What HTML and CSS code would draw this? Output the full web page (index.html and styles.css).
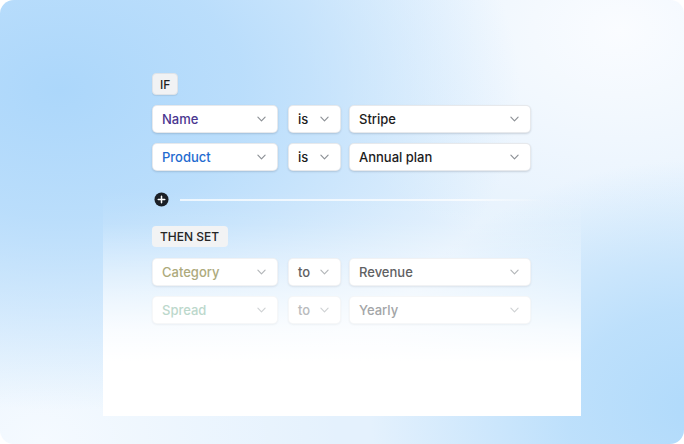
FILE: index.html
```html
<!DOCTYPE html>
<html>
<head>
<meta charset="utf-8">
<link rel="stylesheet" href="styles.css">
</head>
<body>
<div class="frame">
  <div class="fade-panel"></div>
  <div class="rules">
    <div class="tag tag-if">IF</div>
    <div class="row">
      <div class="select"><span class="t-name">Name</span><svg class="chev" viewBox="0 0 10 6"><path d="M1 1l4 4 4-4"/></svg></div>
      <div class="select"><span class="t-dark">is</span><svg class="chev" viewBox="0 0 10 6"><path d="M1 1l4 4 4-4"/></svg></div>
      <div class="select"><span class="t-dark">Stripe</span><svg class="chev" viewBox="0 0 10 6"><path d="M1 1l4 4 4-4"/></svg></div>
    </div>
    <div class="row">
      <div class="select"><span class="t-product">Product</span><svg class="chev" viewBox="0 0 10 6"><path d="M1 1l4 4 4-4"/></svg></div>
      <div class="select"><span class="t-dark">is</span><svg class="chev" viewBox="0 0 10 6"><path d="M1 1l4 4 4-4"/></svg></div>
      <div class="select"><span class="t-dark">Annual plan</span><svg class="chev" viewBox="0 0 10 6"><path d="M1 1l4 4 4-4"/></svg></div>
    </div>
    <div class="divider">
      <svg class="plus" viewBox="0 0 16 16"><circle cx="8" cy="8" r="7.5"/><path d="M8 4.5v7M4.5 8h7"/></svg>
      <div class="line"></div>
    </div>
    <div class="tag tag-then">THEN SET</div>
    <div class="row row-faded">
      <div class="select"><span class="t-category">Category</span><svg class="chev" viewBox="0 0 10 6"><path d="M1 1l4 4 4-4"/></svg></div>
      <div class="select"><span class="t-mid">to</span><svg class="chev" viewBox="0 0 10 6"><path d="M1 1l4 4 4-4"/></svg></div>
      <div class="select"><span class="t-mid">Revenue</span><svg class="chev" viewBox="0 0 10 6"><path d="M1 1l4 4 4-4"/></svg></div>
    </div>
    <div class="row row-faint">
      <div class="select"><span class="t-spread">Spread</span><svg class="chev" viewBox="0 0 10 6"><path d="M1 1l4 4 4-4"/></svg></div>
      <div class="select"><span class="t-light t-to">to</span><svg class="chev" viewBox="0 0 10 6"><path d="M1 1l4 4 4-4"/></svg></div>
      <div class="select"><span class="t-light">Yearly</span><svg class="chev" viewBox="0 0 10 6"><path d="M1 1l4 4 4-4"/></svg></div>
    </div>
  </div>
</div>
</body>
</html>
```
FILE: styles.css
```css
* { box-sizing: border-box; }
html, body { margin: 0; padding: 0; background: #ffffff; }
body { font-family: Inter, "Noto Sans", sans-serif; }

.frame {
  position: relative;
  width: 684px;
  height: 444px;
  border-radius: 14px;
  overflow: hidden;
  padding: 73px 0 0 152px;
  background:
    radial-gradient(ellipse 460px 320px at 60px 90px, rgba(172,215,251,1) 0%, rgba(172,215,251,0.75) 40%, rgba(172,215,251,0) 100%),
    radial-gradient(ellipse 330px 250px at 700px 410px, rgba(176,218,251,1) 0%, rgba(176,218,251,0.75) 40%, rgba(176,218,251,0) 100%),
    radial-gradient(ellipse 320px 240px at 620px 30px, rgba(250,252,255,1) 0%, rgba(250,252,255,0) 100%),
    radial-gradient(ellipse 300px 200px at 40px 440px, rgba(245,250,255,1) 0%, rgba(245,250,255,0) 100%),
    #e4f1fd;
}

.fade-panel {
  position: absolute;
  left: 103px;
  top: 190px;
  width: 478px;
  height: 226px;
  background: linear-gradient(to bottom, rgba(255,255,255,0) 0%, rgba(255,255,255,0.08) 15%, rgba(255,255,255,0.45) 38%, rgba(255,255,255,0.85) 62%, #ffffff 76%);
}

.rules {
  position: relative;
  width: 379px;
  display: flex;
  flex-direction: column;
  align-items: flex-start;
}

.tag {
  font-size: 12px;
  font-weight: 500;
  color: #1f1f1f;
  border-radius: 4px;
  display: flex;
  align-items: center;
}
.tag-if {
  height: 22px;
  padding: 0 7px;
  background: #f1f2f4;
  border: 1px solid #dfe3e8;
  box-shadow: 0 1px 1px rgba(0,0,0,0.08);
  margin-bottom: 10px;
}
.tag-then {
  height: 21px;
  padding: 0 9px 0 8px;
  background: #f2f3f4;
  margin-top: 19px;
  margin-bottom: 11px;
  color: #262626;
}

.row {
  width: 379px;
  display: grid;
  grid-template-columns: 126px 54px 181px;
  column-gap: 9px;
  margin-bottom: 10px;
}
.row .select:nth-child(2) { margin-left: 1px; }
.row .select:nth-child(3) { margin-left: -1px; }

.select {
  height: 28px;
  background: #ffffff;
  border: 1px solid rgba(20,40,70,0.10);
  border-radius: 5px;
  box-shadow: 0 1px 2px rgba(20,30,50,0.16);
  display: flex;
  align-items: center;
  justify-content: space-between;
  padding: 0 11px 0 9px;
  font-size: 13px;
  font-weight: 500;
}

.chev {
  width: 9px;
  height: 6px;
  fill: none;
  stroke: #8d9196;
  stroke-width: 1.3;
  stroke-linecap: round;
  stroke-linejoin: round;
}

.t-name { color: #4a3690; }
.t-product { color: #1f6bd0; }
.t-dark { color: #1c1c1c; }
.t-category { color: #adaa7c; }
.t-mid { color: #5f6163; }
.t-spread { color: #bcd8cc; }
.t-light { color: #a3a5a7; }
.t-to { color: #b9bbbd; }

.row-faded .select {
  border-color: rgba(20,40,70,0.06);
  box-shadow: 0 1px 2px rgba(20,30,50,0.09);
}
.row-faded .chev { stroke: #b3b6b9; }
.row-faint .select {
  border-color: rgba(20,40,70,0.04);
  box-shadow: 0 1px 2px rgba(20,30,50,0.05);
}
.row-faint .chev { stroke: #cfd2d4; }

.divider {
  width: 390px;
  height: 15px;
  margin-top: 11px;
  display: flex;
  align-items: center;
  gap: 11px;
  margin-left: 2px;
}
.plus {
  width: 15px;
  height: 15px;
  flex: none;
}
.plus circle { fill: #1b2027; }
.plus path { stroke: #ffffff; stroke-width: 1.6; stroke-linecap: round; }
.line {
  flex: 1;
  height: 2px;
  background: linear-gradient(90deg, rgba(255,255,255,0.75) 0%, rgba(255,255,255,0.7) 80%, rgba(255,255,255,0) 100%);
}
```
